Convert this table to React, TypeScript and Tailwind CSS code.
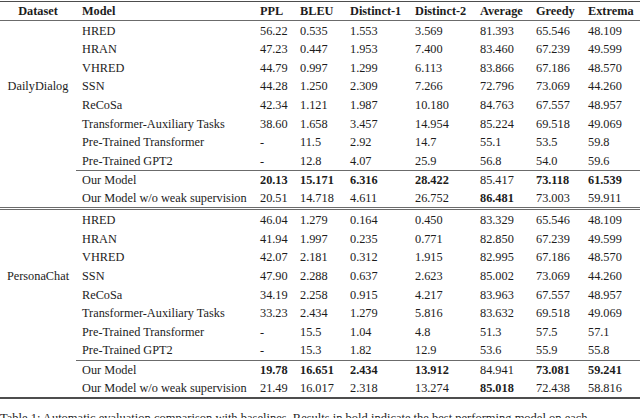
const cols = "grid grid-cols-[178px_40px_50px_65px_65px_56px_52px_58px]";

type Row = { model: string; vals: string[]; bold?: number[] };

const daily: Row[] = [
  { model: "HRED", vals: ["56.22", "0.535", "1.553", "3.569", "81.393", "65.546", "48.109"] },
  { model: "HRAN", vals: ["47.23", "0.447", "1.953", "7.400", "83.460", "67.239", "49.599"] },
  { model: "VHRED", vals: ["44.79", "0.997", "1.299", "6.113", "83.866", "67.186", "48.570"] },
  { model: "SSN", vals: ["44.28", "1.250", "2.309", "7.266", "72.796", "73.069", "44.260"] },
  { model: "ReCoSa", vals: ["42.34", "1.121", "1.987", "10.180", "84.763", "67.557", "48.957"] },
  { model: "Transformer-Auxiliary Tasks", vals: ["38.60", "1.658", "3.457", "14.954", "85.224", "69.518", "49.069"] },
  { model: "Pre-Trained Transformer", vals: ["-", "11.5", "2.92", "14.7", "55.1", "53.5", "59.8"] },
  { model: "Pre-Trained GPT2", vals: ["-", "12.8", "4.07", "25.9", "56.8", "54.0", "59.6"] },
  { model: "Our Model", vals: ["20.13", "15.171", "6.316", "28.422", "85.417", "73.118", "61.539"], bold: [0, 1, 2, 3, 5, 6] },
  { model: "Our Model w/o weak supervision", vals: ["20.51", "14.718", "4.611", "26.752", "86.481", "73.003", "59.911"], bold: [4] },
];

const persona: Row[] = [
  { model: "HRED", vals: ["46.04", "1.279", "0.164", "0.450", "83.329", "65.546", "48.109"] },
  { model: "HRAN", vals: ["41.94", "1.997", "0.235", "0.771", "82.850", "67.239", "49.599"] },
  { model: "VHRED", vals: ["42.07", "2.181", "0.312", "1.915", "82.995", "67.186", "48.570"] },
  { model: "SSN", vals: ["47.90", "2.288", "0.637", "2.623", "85.002", "73.069", "44.260"] },
  { model: "ReCoSa", vals: ["34.19", "2.258", "0.915", "4.217", "83.963", "67.557", "48.957"] },
  { model: "Transformer-Auxiliary Tasks", vals: ["33.23", "2.434", "1.279", "5.816", "83.632", "69.518", "49.069"] },
  { model: "Pre-Trained Transformer", vals: ["-", "15.5", "1.04", "4.8", "51.3", "57.5", "57.1"] },
  { model: "Pre-Trained GPT2", vals: ["-", "15.3", "1.82", "12.9", "53.6", "55.9", "55.8"] },
  { model: "Our Model", vals: ["19.78", "16.651", "2.434", "13.912", "84.941", "73.081", "59.241"], bold: [0, 1, 2, 3, 5, 6] },
  { model: "Our Model w/o weak supervision", vals: ["21.49", "16.017", "2.318", "13.274", "85.018", "72.438", "58.816"], bold: [4] },
];

const headers = ["Model", "PPL", "BLEU", "Distinct-1", "Distinct-2", "Average", "Greedy", "Extrema"];

function Section({ name, rows }: { name: string; rows: Row[] }) {
  return (
    <div className="flex flex-col">
      {rows.map((r, i) => (
        <div key={i} className="flex">
          <div className="w-[76px] h-[18.6px] flex items-center justify-center">{i === 3 ? name : ""}</div>
          <div className={`${cols} h-[18.6px] items-center flex-1 ${i === 8 ? "border-t border-[#6b6b6b]" : ""}`}>
            <div className="pl-[6px] whitespace-nowrap">{r.model}</div>
            {r.vals.map((v, j) => (
              <div key={j} className={`pl-[6px] ${r.bold?.includes(j) ? "font-bold" : ""}`}>
                {v}
              </div>
            ))}
          </div>
        </div>
      ))}
    </div>
  );
}

export default function App() {
  return (
    <div className="w-[640px] h-[418px] overflow-hidden bg-white text-[#1c1c1c] text-[12.3px] leading-none font-[family-name:'Liberation_Serif',serif] pt-[1px]">
      <div className="border-t-[1.5px] border-[#4d4d4d]" />
      <div className="flex h-[18.5px] items-center font-bold border-b border-[#6b6b6b]">
        <div className="w-[76px] text-center">Dataset</div>
        <div className={`${cols} flex-1`}>
          {headers.map((h) => (
            <div key={h} className="pl-[6px]">{h}</div>
          ))}
        </div>
      </div>
      <div className="pt-[1px]">
        <Section name="DailyDialog" rows={daily} />
      </div>
      <div className="border-b-[3px] border-double border-[#6b6b6b]" />
      <div className="pt-[0.7px]">
        <Section name="PersonaChat" rows={persona} />
      </div>
      <div className="border-t-2 border-[#4d4d4d]" />
      <p className="mt-[12px] text-[12.5px] leading-[15px] whitespace-nowrap">
        Table 1: Automatic evaluation comparison with baselines. Results in bold indicate the best performing model on each.
      </p>
    </div>
  );
}
